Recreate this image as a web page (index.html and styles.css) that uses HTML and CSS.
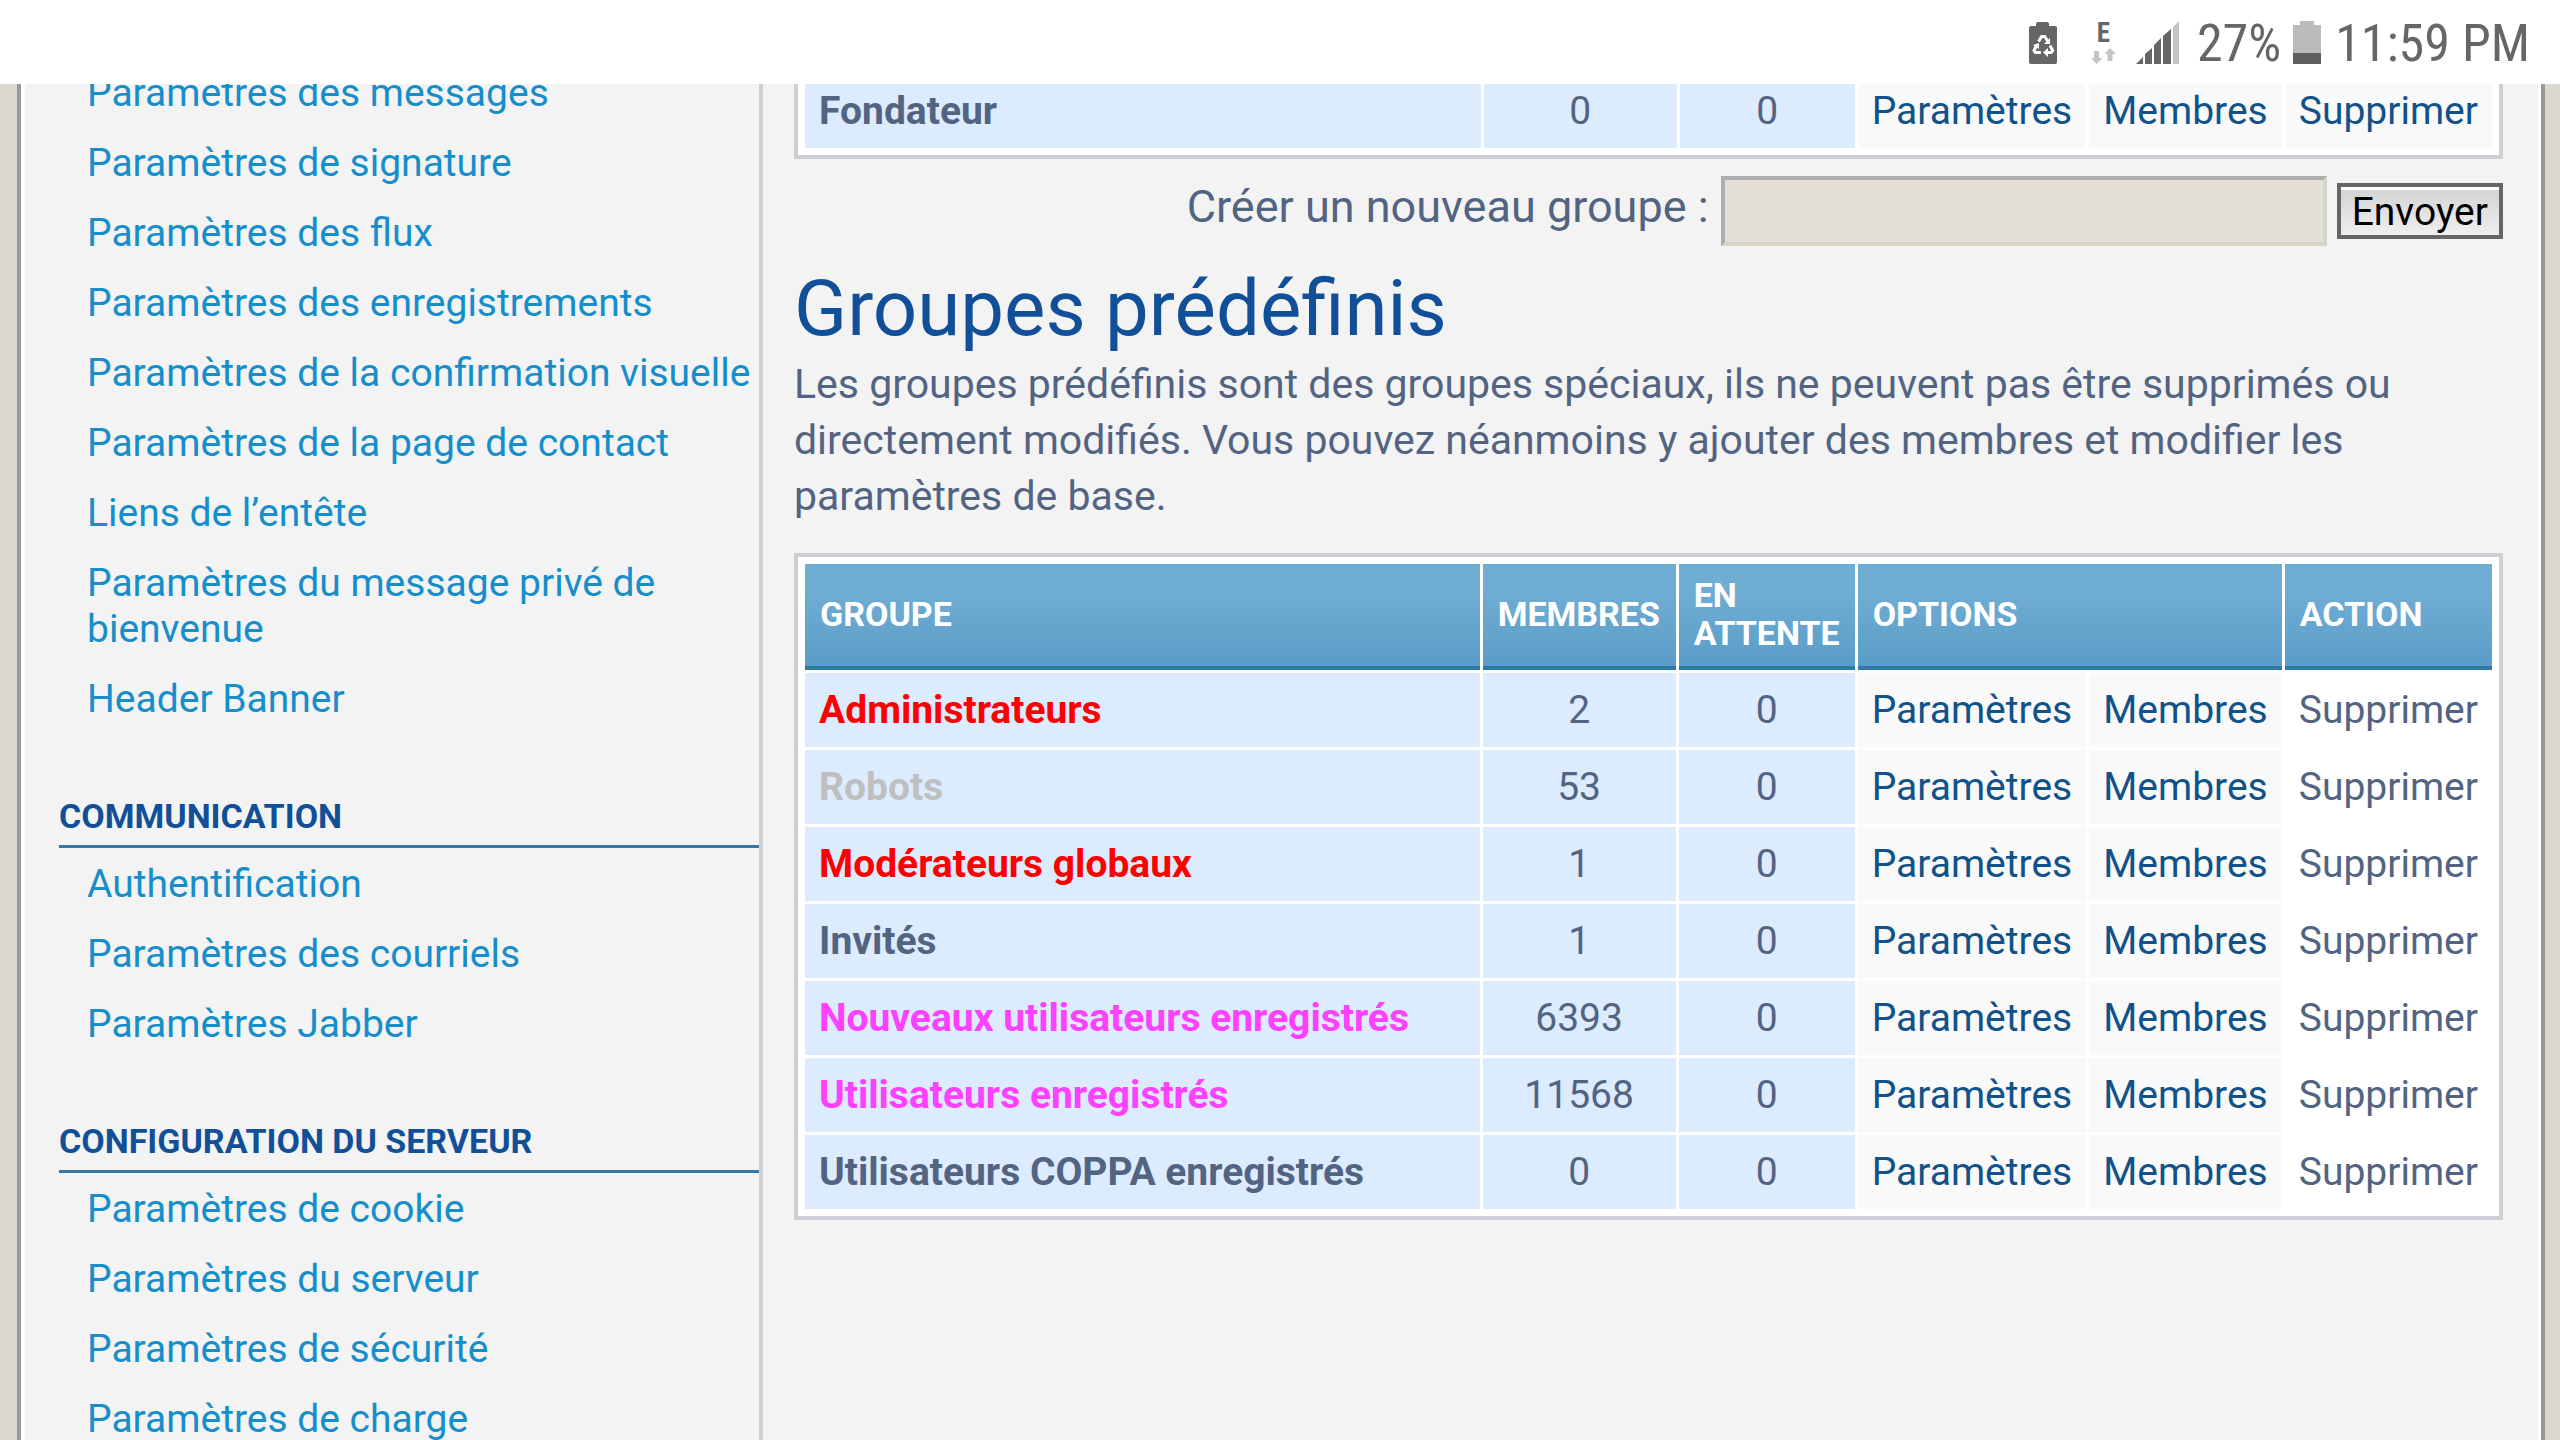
FILE: index.html
```
<!DOCTYPE html>
<html lang="fr">
  <head>
    <meta charset="UTF-8" />
    <meta name="viewport" content="width=device-width, initial-scale=1.0" />
    <title>Gestion des groupes</title>
    <link rel="stylesheet" href="styles.css">
  </head>
  <body>
    <header class="status-bar">
      <svg class="icon-saver" width="28" height="43" viewBox="0 0 28 43">
        <path fill="#666" d="M7 3q0-2 2-2h9q2 0 2 2v2h6q2 0 2 2v34q0 2-2 2H2q-2 0-2-2V7q0-2 2-2h5z" />
        <g fill="none" stroke="#fff" stroke-width="3">
          <path d="M9.500 20.500L12.700 15.500h3L19 20.500" />
          <path d="M7.500 24.500L5 29.500l1.500 2H12" />
          <path d="M21 24.500l2.700 5-1.500 2H18.500" />
        </g>
        <path fill="#fff" d="M21 17v6h-6zM4 24l6-2v6zM19 27v9l-5-4.500z" />
      </svg>
      <div class="network">
        <span>E</span>
        <svg width="25" height="16" viewBox="0 0 25 16">
          <path fill="#c4c4c4" d="M3 3h5v7h3.500L5.500 16 0 10h3zM16.500 13h5V6H25l-6-6-5.500 6h3z" />
        </svg>
      </div>
      <svg class="icon-signal" width="43" height="43" viewBox="0 0 43 43">
        <path fill="#666" d="M0 43l7-7v7zM9 33l7-6v16H9zM18 24l7-7v26h-7zM27 15l8-7v35h-8z" />
        <path fill="#c4c4c4" d="M37 6l6-6v43h-6z" />
      </svg>
      <span class="battery-level">27%</span>
      <svg class="icon-battery" width="28" height="43" viewBox="0 0 28 43">
        <path fill="#bbb" d="M7 0h14v4h7v28H0V4h7z" />
        <path fill="#5e5e5e" d="M0 32h28v11H0z" />
      </svg>
      <span class="clock">11:59 PM</span>
    </header>

    <div class="page">
      <nav class="sidebar">
        <ul>
          <li><a href="#">Paramètres des messages</a></li>
          <li><a href="#">Paramètres de signature</a></li>
          <li><a href="#">Paramètres des flux</a></li>
          <li><a href="#">Paramètres des enregistrements</a></li>
          <li><a href="#">Paramètres de la confirmation visuelle</a></li>
          <li><a href="#">Paramètres de la page de contact</a></li>
          <li><a href="#">Liens de l’entête</a></li>
          <li><a href="#">Paramètres du message privé de bienvenue</a></li>
          <li><a href="#">Header Banner</a></li>
        </ul>
        <h2>Communication</h2>
        <ul>
          <li><a href="#">Authentification</a></li>
          <li><a href="#">Paramètres des courriels</a></li>
          <li><a href="#">Paramètres Jabber</a></li>
        </ul>
        <h2>Configuration du serveur</h2>
        <ul>
          <li><a href="#">Paramètres de cookie</a></li>
          <li><a href="#">Paramètres du serveur</a></li>
          <li><a href="#">Paramètres de sécurité</a></li>
          <li><a href="#">Paramètres de charge</a></li>
        </ul>
      </nav>

      <main class="content">
        <table class="groups">
          <tbody>
            <tr>
              <td class="name">Fondateur</td>
              <td class="count members">0</td>
              <td class="count pending">0</td>
              <td><a href="#">Paramètres</a></td>
              <td><a href="#">Membres</a></td>
              <td><a href="#">Supprimer</a></td>
            </tr>
          </tbody>
        </table>

        <form class="new-group">
          <label for="group_name">Créer un nouveau groupe :</label>
          <input type="text" id="group_name" name="group_name" />
          <button type="submit">Envoyer</button>
        </form>

        <h1>Groupes prédéfinis</h1>
        <p>Les groupes prédéfinis sont des groupes spéciaux, ils ne peuvent pas être supprimés ou directement modifiés. Vous pouvez néanmoins y ajouter des membres et modifier les paramètres de base.</p>

        <table class="groups">
          <thead>
            <tr>
              <th class="name">Groupe</th>
              <th class="members">Membres</th>
              <th class="pending">En attente</th>
              <th colspan="2">Options</th>
              <th>Action</th>
            </tr>
          </thead>
          <tbody>
            <tr>
              <td class="name admin">Administrateurs</td>
              <td class="count">2</td>
              <td class="count">0</td>
              <td><a href="#">Paramètres</a></td>
              <td><a href="#">Membres</a></td>
              <td class="disabled">Supprimer</td>
            </tr>
            <tr>
              <td class="name bots">Robots</td>
              <td class="count">53</td>
              <td class="count">0</td>
              <td><a href="#">Paramètres</a></td>
              <td><a href="#">Membres</a></td>
              <td class="disabled">Supprimer</td>
            </tr>
            <tr>
              <td class="name admin">Modérateurs globaux</td>
              <td class="count">1</td>
              <td class="count">0</td>
              <td><a href="#">Paramètres</a></td>
              <td><a href="#">Membres</a></td>
              <td class="disabled">Supprimer</td>
            </tr>
            <tr>
              <td class="name">Invités</td>
              <td class="count">1</td>
              <td class="count">0</td>
              <td><a href="#">Paramètres</a></td>
              <td><a href="#">Membres</a></td>
              <td class="disabled">Supprimer</td>
            </tr>
            <tr>
              <td class="name registered">Nouveaux utilisateurs enregistrés</td>
              <td class="count">6393</td>
              <td class="count">0</td>
              <td><a href="#">Paramètres</a></td>
              <td><a href="#">Membres</a></td>
              <td class="disabled">Supprimer</td>
            </tr>
            <tr>
              <td class="name registered">Utilisateurs enregistrés</td>
              <td class="count">11568</td>
              <td class="count">0</td>
              <td><a href="#">Paramètres</a></td>
              <td><a href="#">Membres</a></td>
              <td class="disabled">Supprimer</td>
            </tr>
            <tr>
              <td class="name">Utilisateurs COPPA enregistrés</td>
              <td class="count">0</td>
              <td class="count">0</td>
              <td><a href="#">Paramètres</a></td>
              <td><a href="#">Membres</a></td>
              <td class="disabled">Supprimer</td>
            </tr>
          </tbody>
        </table>
      </main>
    </div>
  </body>
</html>
```
FILE: styles.css
```
* {
  margin: 0;
  padding: 0;
  box-sizing: border-box;
}

body {
  height: 100vh;
  overflow: hidden;
  padding: 0 15px 0 17px;
  background: #dad7cf;
  color: #536482;
  font-family: Roboto, "Liberation Sans", sans-serif;
  font-size: 39px;
  line-height: 46px;
}

a {
  text-decoration: none;
}

.status-bar {
  position: fixed;
  top: 0;
  left: 0;
  right: 0;
  z-index: 1;
  display: flex;
  justify-content: flex-end;
  align-items: center;
  height: 84px;
  padding-right: 30px;
  background: #fff;
  color: #666;
  font-family: "Roboto Condensed", "Liberation Sans Narrow", Roboto, sans-serif;
  font-size: 52px;
}

.network {
  display: flex;
  flex-direction: column;
  align-items: center;
  gap: 2px;
  margin-left: 34px;
  font-size: 27px;
  font-weight: bold;
  line-height: 25px;
}

.icon-signal {
  margin: 0 18px 0 20px;
}

.icon-battery {
  margin: 0 14px 0 12px;
}

.battery-level,
.clock {
  padding-top: 3px;
}

.page {
  display: flex;
  min-height: 100vh;
  border: 4px solid #999;
  border-width: 0 4px;
  background: #f3f3f3;
  box-shadow: inset 4px 0 #fff, inset -3px 0 #fff;
}

.sidebar {
  flex: none;
  width: 742px;
  padding: 58px 0 0 38px;
  border-right: 4px solid #cccfd3;
}

.sidebar ul {
  list-style: none;
}

.sidebar li {
  padding: 12px 0 12px 28px;
}

.sidebar a {
  color: #168ecb;
}

.sidebar h2 {
  margin: 63px 0 1px;
  padding-bottom: 10px;
  border-bottom: 3px solid #327aa5;
  color: #115098;
  font-size: 34px;
  line-height: 38px;
  text-transform: uppercase;
}

.content {
  flex: 1;
  padding: 63px 38px 0 31px;
}

.groups {
  width: 100%;
  padding: 4px;
  border: 4px solid #cccfd3;
  border-spacing: 3px;
  background: #fff;
}

.groups th {
  padding: 12px 15px 14px;
  border-bottom: 4px solid #327aa5;
  background: linear-gradient(#70add3 25%, #5a9dc8);
  color: #fff;
  font-size: 34px;
  line-height: 38px;
  text-align: left;
  text-transform: uppercase;
}

.groups td {
  padding: 14px;
  background: #f9f9f9;
  white-space: nowrap;
}

.groups td.name,
.groups td.count {
  background: #dcebfe;
}

.groups .name {
  width: 100%;
  font-weight: bold;
}

.groups .members {
  min-width: 193px;
}

.groups .pending {
  min-width: 175px;
}

.groups .count {
  text-align: center;
}

.groups a {
  color: #105289;
}

.groups .admin {
  color: #f00;
}

.groups .bots {
  color: #bfbfbf;
}

.groups .registered {
  color: #ff40ff;
}

.groups td.disabled {
  background: #fff;
}

.new-group {
  display: flex;
  justify-content: flex-end;
  align-items: center;
  margin-top: 17px;
}

.new-group label {
  padding-bottom: 8px;
  font-size: 45px;
}

.new-group input {
  width: 606px;
  height: 70px;
  margin: 0 10px 0 12px;
  padding: 0 10px;
  border: 4px solid;
  border-color: #adadad #d5d5c8 #d5d5c8 #adadad;
  background: #e3dfd8;
  font: inherit;
}

.new-group button {
  padding: 2px 11px 0;
  border: 4px solid #666;
  background: linear-gradient(#d2d2d2, #efefef);
  box-shadow: inset 0 3px #fff;
  color: #000;
  font: inherit;
}

h1 {
  margin-top: 15px;
  color: #115098;
  font-size: 78px;
  font-weight: normal;
  line-height: 95px;
}

.content p {
  margin-bottom: 29px;
  font-size: 41px;
  line-height: 56px;
}
```
